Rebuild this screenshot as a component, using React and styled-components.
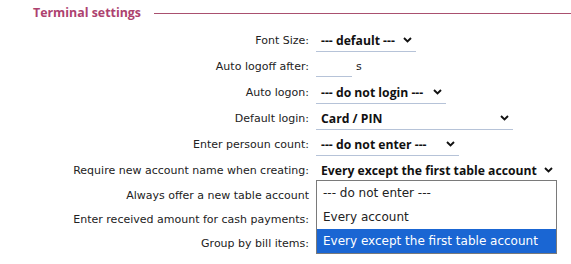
import styled, { createGlobalStyle } from "styled-components";

const GlobalStyle = createGlobalStyle`
  html, body {
    margin: 0;
    padding: 0;
    background: #ffffff;
  }
  body {
    font-family: "DejaVu Sans", sans-serif;
  }
`;

const Page = styled.div`
  width: 571px;
  height: 264px;
  overflow: hidden;
  position: relative;
`;

const Legend = styled.div`
  display: flex;
  align-items: center;
  height: 27px;
  padding-left: 33px;
  gap: 13px;
`;

const LegendTitle = styled.span`
  font-family: "Open Sans", sans-serif;
  font-weight: 700;
  font-size: 12.4px;
  color: #ad426f;
  margin-top: -2px;
`;

const LegendLine = styled.div`
  flex: 1;
  height: 1px;
  background: #a9506f;
  margin-top: -1px;
`;

const Form = styled.div`
  display: grid;
  grid-template-columns: 309px 1fr;
  column-gap: 7px;
`;

const Label = styled.div`
  display: flex;
  align-items: center;
  justify-content: flex-end;
  height: ${(p) => p.$h || 26}px;
  font-size: 11px;
  color: #222;
  white-space: nowrap;
`;

const Field = styled.div`
  display: flex;
  align-items: center;
  height: ${(p) => p.$h || 26}px;
  position: relative;
`;

const Select = styled.div`
  box-sizing: border-box;
  display: flex;
  align-items: center;
  justify-content: space-between;
  width: ${(p) => p.$w}px;
  height: 22px;
  margin-top: 1px;
  padding: 0 4px 0 5px;
  border-bottom: 1px solid ${(p) => (p.$open ? "transparent" : "#b6c3d8")};
  font-family: "Open Sans", sans-serif;
  font-weight: 700;
  font-size: 12.2px;
  color: #111;
  white-space: nowrap;
`;

const Chevron = () => (
  <svg width="9" height="6" viewBox="0 0 9 6">
    <polyline
      points="1,1 4.5,4.5 8,1"
      fill="none"
      stroke="#111"
      strokeWidth="1.9"
    />
  </svg>
);

const Input = styled.div`
  box-sizing: border-box;
  width: 36px;
  height: 20px;
  border-bottom: 1px solid #b6c3d8;
  margin-top: 2px;
`;

const Unit = styled.span`
  font-size: 11px;
  color: #222;
  margin-left: 4px;
`;

const Dropdown = styled.div`
  position: absolute;
  left: 0;
  top: 23px;
  z-index: 2;
  box-sizing: border-box;
  width: 241px;
  border: 1px solid #7a7a7a;
  background: #fff;
`;

const Option = styled.div`
  height: 24px;
  display: flex;
  align-items: center;
  padding-left: 6px;
  font-size: 12px;
  color: ${(p) => (p.$selected ? "#fff" : "#222")};
  background: ${(p) => (p.$selected ? "#1a66d3" : "transparent")};
  white-space: nowrap;
`;

export default function App() {
  return (
    <Page>
      <GlobalStyle />
      <Legend>
        <LegendTitle>Terminal settings</LegendTitle>
        <LegendLine />
      </Legend>
      <Form>
        <Label>Font Size:</Label>
        <Field>
          <Select $w={100}>
            --- default --- <Chevron />
          </Select>
        </Field>

        <Label>Auto logoff after:</Label>
        <Field>
          <Input />
          <Unit>s</Unit>
        </Field>

        <Label>Auto logon:</Label>
        <Field>
          <Select $w={130}>
            --- do not login --- <Chevron />
          </Select>
        </Field>

        <Label>Default login:</Label>
        <Field>
          <Select $w={197}>
            Card / PIN <Chevron />
          </Select>
        </Field>

        <Label>Enter persoun count:</Label>
        <Field>
          <Select $w={143}>
            --- do not enter --- <Chevron />
          </Select>
        </Field>

        <Label>Require new account name when creating:</Label>
        <Field>
          <Select $w={241} $open>
            Every except the first table account <Chevron />
          </Select>
          <Dropdown>
            <Option>--- do not enter ---</Option>
            <Option>Every account</Option>
            <Option $selected>Every except the first table account</Option>
          </Dropdown>
        </Field>

        <Label $h={24}>Always offer a new table account</Label>
        <Field $h={24} />

        <Label $h={24}>Enter received amount for cash payments:</Label>
        <Field $h={24} />

        <Label $h={24}>Group by bill items:</Label>
        <Field $h={24} />
      </Form>
    </Page>
  );
}
